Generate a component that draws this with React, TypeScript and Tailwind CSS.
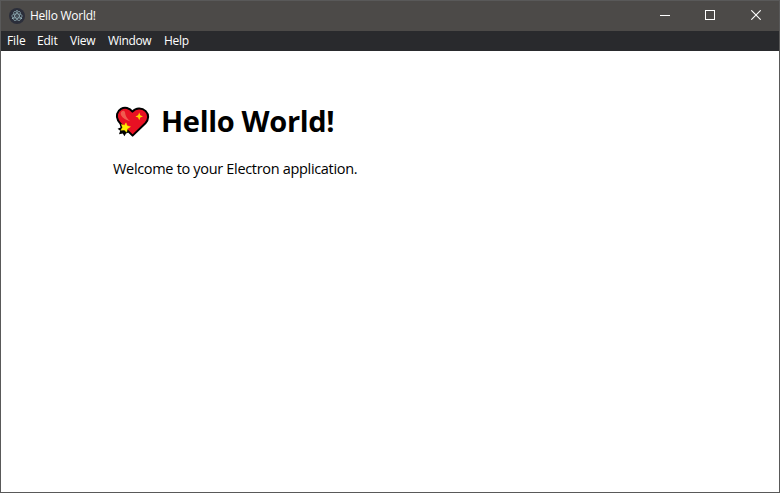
function ElectronIcon() {
  return (
    <svg viewBox="0 0 16 16" className="size-4 shrink-0" fill="none" stroke="#a9ccd4" strokeWidth="0.6">
      <circle cx="8" cy="8" r="8" fill="#2b2e3a" stroke="none" />
      <g opacity="0.95">
        <ellipse cx="8" cy="8" rx="5.2" ry="2.1" />
        <ellipse cx="8" cy="8" rx="5.2" ry="2.1" transform="rotate(60 8 8)" />
        <ellipse cx="8" cy="8" rx="5.2" ry="2.1" transform="rotate(120 8 8)" />
        <circle cx="8" cy="8" r="0.6" fill="#a9ccd4" stroke="none" />
        <circle cx="3.6" cy="10.2" r="0.7" fill="#a9ccd4" stroke="none" />
        <circle cx="12.4" cy="10.2" r="0.7" fill="#a9ccd4" stroke="none" />
        <circle cx="8" cy="2.8" r="0.7" fill="#a9ccd4" stroke="none" />
      </g>
    </svg>
  );
}

function SparklingHeart() {
  return (
    <svg viewBox="0 0 35 33" className="h-[33px] w-[35px] shrink-0">
      <path
        d="M17.4 6.6C14.6 2.7 9.7 1.8 6 3.8 1.8 6.2.7 11.3 3.1 15.6c.8 1.5 2 2.7 3.3 4L17.6 30.6 30.4 18.2c3.5-3.7 3.7-8.7.3-12.1C26.9 2.4 20.9 2.6 17.4 6.6Z"
        fill="#e81123"
        stroke="#000"
        strokeWidth="2"
        strokeLinejoin="round"
      />
      <path d="M4.5 18.6L7 19.6 10 23 12.6 25 13.5 27.5 11 28.6 9.4 31.2 7.8 28.6 4 29.2 5.2 25.8 2.6 23.8 5.6 22.4Z" fill="#000" />
      <path d="M15 16.3c-3.6-1-7.4-3.2-9.1-6.3-.8-2 .2-4 2.2-4.2 1.9 0 2 1.7 2.3 3.6.5 2.5 2.3 4.7 4.9 6.9Z" fill="#f05b4f" />
      <path d="M11 17.8l1.1 3 3.4.9-3 2-.9 3.5-2.3-2.1-3.5.2 1.6-2.9-1-3 3.1.9Z" fill="#fff100" stroke="#fff100" strokeWidth="0.4" />
      <path d="M24.2 7.6l1.1 2.7 2.7 1.1-2.7 1.1-1.1 2.7-1.1-2.7-2.7-1.1 2.7-1.1Z" fill="#ffd400" />
    </svg>
  );
}

export default function App() {
  return (
    <div className="flex h-[493px] w-[780px] flex-col overflow-hidden border border-[#595959] bg-white font-['Open_Sans','Noto_Sans',sans-serif] text-black">
      <header className="flex h-[30px] shrink-0 items-center bg-[#4c4a48] pl-2 text-white">
        <ElectronIcon />
        <span className="ml-[5px] text-[12px] leading-4 tracking-[-0.25px] whitespace-nowrap">Hello World!</span>
        <div className="ml-auto flex h-full">
          <button aria-label="Minimize" className="flex w-[46px] items-center justify-center pb-[2px]">
            <svg width="10" height="10" viewBox="0 0 10 10" shapeRendering="crispEdges"><path d="M0 5h10v1H0z" fill="#fff" /></svg>
          </button>
          <button aria-label="Maximize" className="flex w-11 items-center justify-center pb-[2px]">
            <span className="size-[10px] border border-white" />
          </button>
          <button aria-label="Close" className="flex w-[47px] items-center justify-center pb-[2px]">
            <svg width="10" height="10" viewBox="0 0 10 10"><path d="M.3.3l9.4 9.4M9.7.3L.3 9.7" stroke="#fff" strokeWidth="1.1" /></svg>
          </button>
        </div>
      </header>
      <nav className="flex h-5 shrink-0 items-center bg-[#292a2d] pl-[6px] text-[12px] leading-5 text-white">
        <span className="w-[30px] tracking-[-0.1px]">File</span>
        <span className="w-[33px] tracking-[-0.2px]">Edit</span>
        <span className="w-[38px] tracking-[-0.2px]">View</span>
        <span className="w-14 tracking-[-0.35px]">Window</span>
        <span className="tracking-[-0.3px]">Help</span>
      </nav>
      <main className="pt-[50px] pl-[112px]">
        <h1 className="flex h-10 items-center text-[29px] font-bold">
          <span className="ml-0.5"><SparklingHeart /></span>
          <span className="ml-[11px] leading-10 tracking-[-0.32px] whitespace-nowrap">Hello World!</span>
        </h1>
        <p className="mt-[18px] text-[14.5px] leading-5 tracking-[-0.32px]">Welcome to your Electron application.</p>
      </main>
    </div>
  );
}
